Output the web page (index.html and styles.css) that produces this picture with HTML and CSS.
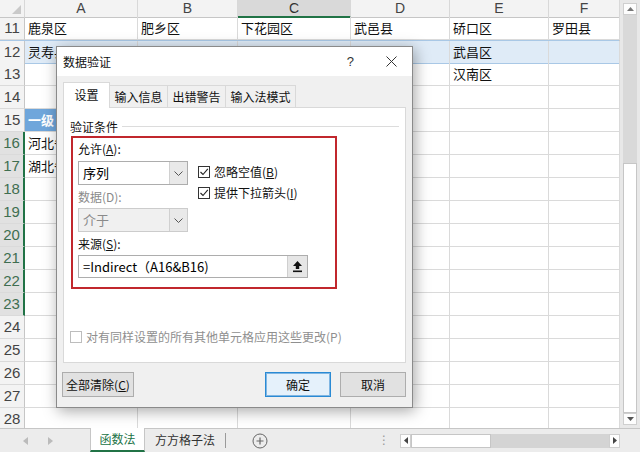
FILE: index.html
```html
<!DOCTYPE html>
<html lang="zh-CN">
<head>
  <meta charset="UTF-8">
  <title>数据验证</title>
  <link rel="stylesheet" href="styles.css">
</head>
<body>
  <div class="app">
    <div class="main">
      <div class="grid">
        <div class="row head">
          <div class="corner"><span class="tri"></span></div>
          <div class="ch">A</div><div class="ch">B</div><div class="ch sel">C</div>
          <div class="ch">D</div><div class="ch">E</div><div class="ch">F</div>
        </div>
        <div class="row"><div class="rh">11</div><div class="c">鹿泉区</div><div class="c">肥乡区</div><div class="c">下花园区</div><div class="c">武邑县</div><div class="c">硚口区</div><div class="c">罗田县</div></div>
        <div class="row hl"><div class="rh">12</div><div class="c">灵寿县</div><div class="c">邱县</div><div class="c"></div><div class="c">安平县</div><div class="c">武昌区</div><div class="c"></div></div>
        <div class="row"><div class="rh">13</div><div class="c"></div><div class="c"></div><div class="c"></div><div class="c"></div><div class="c">汉南区</div><div class="c"></div></div>
        <div class="row"><div class="rh">14</div><div class="c"></div><div class="c"></div><div class="c"></div><div class="c"></div><div class="c"></div><div class="c"></div></div>
        <div class="row"><div class="rh">15</div><div class="c blue">一级</div><div class="c blue"></div><div class="c"></div><div class="c"></div><div class="c"></div><div class="c"></div></div>
        <div class="row"><div class="rh on">16</div><div class="c">河北省</div><div class="c"></div><div class="c"></div><div class="c"></div><div class="c"></div><div class="c"></div></div>
        <div class="row"><div class="rh on">17</div><div class="c">湖北省</div><div class="c"></div><div class="c"></div><div class="c"></div><div class="c"></div><div class="c"></div></div>
        <div class="row"><div class="rh on">18</div><div class="c"></div><div class="c"></div><div class="c"></div><div class="c"></div><div class="c"></div><div class="c"></div></div>
        <div class="row"><div class="rh on">19</div><div class="c"></div><div class="c"></div><div class="c"></div><div class="c"></div><div class="c"></div><div class="c"></div></div>
        <div class="row"><div class="rh on">20</div><div class="c"></div><div class="c"></div><div class="c"></div><div class="c"></div><div class="c"></div><div class="c"></div></div>
        <div class="row"><div class="rh on">21</div><div class="c"></div><div class="c"></div><div class="c"></div><div class="c"></div><div class="c"></div><div class="c"></div></div>
        <div class="row"><div class="rh on">22</div><div class="c"></div><div class="c"></div><div class="c"></div><div class="c"></div><div class="c"></div><div class="c"></div></div>
        <div class="row"><div class="rh on">23</div><div class="c"></div><div class="c"></div><div class="c"></div><div class="c"></div><div class="c"></div><div class="c"></div></div>
        <div class="row"><div class="rh">24</div><div class="c"></div><div class="c"></div><div class="c"></div><div class="c"></div><div class="c"></div><div class="c"></div></div>
        <div class="row"><div class="rh">25</div><div class="c"></div><div class="c"></div><div class="c"></div><div class="c"></div><div class="c"></div><div class="c"></div></div>
        <div class="row"><div class="rh">26</div><div class="c"></div><div class="c"></div><div class="c"></div><div class="c"></div><div class="c"></div><div class="c"></div></div>
        <div class="row"><div class="rh">27</div><div class="c"></div><div class="c"></div><div class="c"></div><div class="c"></div><div class="c"></div><div class="c"></div></div>
        <div class="row"><div class="rh">28</div><div class="c"></div><div class="c"></div><div class="c"></div><div class="c"></div><div class="c"></div><div class="c"></div></div>
      </div>

      <div class="vscroll">
        <div class="arrow-btn"><svg width="7" height="4" viewBox="0 0 7 4"><path d="M0 4 L3.5 0 L7 4 Z" fill="#777"/></svg></div>
        <div class="vtrack"></div>
        <div class="vthumb"></div>
        <div class="arrow-btn"><svg width="7" height="4" viewBox="0 0 7 4"><path d="M0 0 L3.5 4 L7 0 Z" fill="#555"/></svg></div>
      </div>

      <!-- 数据验证 对话框 -->
      <div class="dialog">
        <div class="dlg-title">
          <span class="dlg-name">数据验证</span>
          <span class="help">?</span>
          <svg class="close" width="11" height="11" viewBox="0 0 11 11"><path d="M0.5 0.5 L10.5 10.5 M10.5 0.5 L0.5 10.5" stroke="#333" stroke-width="1"/></svg>
        </div>
        <div class="dlg-body">
          <div class="tabs">
            <div class="tab active">设置</div>
            <div class="tab t4">输入信息</div>
            <div class="tab t4">出错警告</div>
            <div class="tab t5">输入法模式</div>
          </div>
          <div class="panel">
            <div class="legend"><span>验证条件</span><span class="legend-line"></span></div>
            <div class="redbox">
              <div class="cols">
                <div class="leftcol">
                  <div class="lbl">允许(<u>A</u>):</div>
                  <div class="combo">
                    <span class="combo-text">序列</span>
                    <span class="combo-btn"><svg width="9" height="5" viewBox="0 0 9 5"><path d="M0.5 0.5 L4.5 4.5 L8.5 0.5" fill="none" stroke="#555"/></svg></span>
                  </div>
                  <div class="lbl gap dim">数据(D):</div>
                  <div class="combo off">
                    <span class="combo-text">介于</span>
                    <span class="combo-btn"><svg width="9" height="5" viewBox="0 0 9 5"><path d="M0.5 0.5 L4.5 4.5 L8.5 0.5" fill="none" stroke="#555"/></svg></span>
                  </div>
                </div>
                <div class="rightcol">
                  <div class="check">
                    <span class="box"><svg width="10" height="10" viewBox="0 0 10 10"><path d="M1.5 5 L4 7.5 L8.8 1.8" fill="none" stroke="#222" stroke-width="1.1"/></svg></span>
                    <span>忽略空值(<u>B</u>)</span>
                  </div>
                  <div class="check">
                    <span class="box"><svg width="10" height="10" viewBox="0 0 10 10"><path d="M1.5 5 L4 7.5 L8.8 1.8" fill="none" stroke="#222" stroke-width="1.1"/></svg></span>
                    <span>提供下拉箭头(<u>I</u>)</span>
                  </div>
                </div>
              </div>
              <div class="lbl gap">来源(<u>S</u>):</div>
              <div class="source">
                <span class="source-text">=Indirect（A16&amp;B16)</span>
                <span class="source-btn"><svg width="11" height="13" viewBox="0 0 11 13"><path d="M5.5 1 L10 6 H7.2 V9 H3.8 V6 H1 Z" fill="#111"/><rect x="1" y="10.5" width="9" height="1.6" fill="#111"/></svg></span>
              </div>
            </div>
            <div class="check applyall">
              <span class="box dimbox"></span>
              <span>对有同样设置的所有其他单元格应用这些更改(P)</span>
            </div>
          </div>
          <div class="buttons">
            <button class="btn">全部清除(<u>C</u>)</button>
            <span class="spacer"></span>
            <button class="btn primary">确定</button>
            <button class="btn">取消</button>
          </div>
        </div>
      </div>
    </div>

    <div class="tabbar">
      <div class="nav">
        <svg width="5" height="8" viewBox="0 0 5 8"><path d="M5 0 L0 4 L5 8 Z" fill="#bbb"/></svg>
        <svg width="5" height="8" viewBox="0 0 5 8"><path d="M0 0 L5 4 L0 8 Z" fill="#bbb"/></svg>
      </div>
      <div class="sheet-tab active">函数法</div>
      <div class="sheet-tab">方方格子法</div>
      <div class="add"><svg width="16" height="16" viewBox="0 0 16 16"><circle cx="8" cy="8" r="7" fill="none" stroke="#666"/><path d="M8 4.5 V11.5 M4.5 8 H11.5" stroke="#666" stroke-width="1.2"/></svg></div>
      <div class="dots">⋮</div>
      <div class="hscroll">
        <div class="h-arrow"><svg width="4" height="7" viewBox="0 0 4 7"><path d="M4 0 L0 3.5 L4 7 Z" fill="#444"/></svg></div>
        <div class="hthumb"></div>
        <div class="htrack"></div>
        <div class="h-arrow"><svg width="4" height="7" viewBox="0 0 4 7"><path d="M0 0 L4 3.5 L0 7 Z" fill="#444"/></svg></div>
      </div>
    </div>
  </div>
</body>
</html>
```

FILE: styles.css
```css
body {
  margin: 0;
  font-family: "Liberation Sans", "Noto Sans CJK SC", sans-serif;
  background: #ffffff;
  color: #000;
}

.app {
  width: 640px;
  height: 452px;
  overflow: hidden;
  display: flex;
  flex-direction: column;
}

.main {
  position: relative;
  height: 428px;
  display: flex;
  overflow: hidden;
}

/* 表格 */
.grid {
  width: 620px;
  border-right: 1px solid #c6c6c6;
  box-sizing: border-box;
}

.row {
  display: grid;
  grid-template-columns: 25px 113px 100px 113px 99px 99px 71px;
  height: 23px;
}

.row.head {
  height: 17px;
}

.corner, .ch {
  background: #f3f3f3;
  border-right: 1px solid #d8d8d8;
  border-bottom: 1px solid #c6c6c6;
  box-sizing: border-box;
}

.corner {
  position: relative;
}

.tri {
  position: absolute;
  right: 3px;
  bottom: 3px;
  width: 0;
  height: 0;
  border-left: 9px solid transparent;
  border-bottom: 9px solid #c9c9c9;
}

.ch {
  font-size: 14px;
  color: #444;
  text-align: center;
  line-height: 16px;
}

.ch.sel {
  background: #d9d9d9;
  border-bottom: 2px solid #217346;
  color: #333;
}

.rh {
  background: #f3f3f3;
  border-right: 1px solid #c6c6c6;
  border-bottom: 1px solid #dadada;
  box-sizing: border-box;
  font-size: 15px;
  color: #444;
  text-align: center;
  line-height: 22px;
}

.rh.on {
  background: #e1e1e1;
  color: #3f6e50;
  border-right: 2px solid #217346;
}

.c {
  border-right: 1px solid #dadada;
  border-bottom: 1px solid #dadada;
  box-sizing: border-box;
  font-family: "Noto Sans CJK SC", sans-serif;
  font-size: 13px;
  line-height: 22px;
  padding-left: 3px;
  white-space: nowrap;
  overflow: hidden;
  color: #111;
}

.hl .c {
  background: #dfebf7;
  border-bottom-color: #a9c8e6;
}

.hl {
  border-top: 1px solid #a9c8e6;
  height: 22px;
}

.c.blue {
  background: #6fa6db;
  color: #fff;
  font-weight: bold;
}

/* 垂直滚动条 */
.vscroll {
  width: 20px;
  background: #e8e8e8;
  display: flex;
  flex-direction: column;
  align-items: center;
  padding-top: 3px;
  box-sizing: border-box;
}

.arrow-btn {
  width: 14px;
  height: 12px;
  background: #fdfdfd;
  border: 1px solid #cfcfcf;
  box-sizing: border-box;
  display: flex;
  align-items: center;
  justify-content: center;
}

.vtrack {
  width: 14px;
  height: 148px;
  background: #d9d9d9;
}

.vthumb {
  width: 14px;
  height: 250px;
  background: #ffffff;
  border: 1px solid #c6c6c6;
  box-sizing: border-box;
}

/* 对话框 */
.dialog {
  position: absolute;
  left: 56px;
  top: 46px;
  width: 355px;
  border: 1px solid #8a8a8a;
  background: #f0f0f0;
  box-shadow: 2px 3px 14px rgba(0, 0, 0, 0.35);
  font-family: "Noto Sans CJK SC", sans-serif;
  font-size: 12px;
}

.dlg-title {
  height: 29px;
  background: #ffffff;
  display: flex;
  align-items: center;
  padding-left: 6px;
}

.dlg-name {
  flex: 1;
  color: #111;
}

.help {
  font-family: "Liberation Sans", sans-serif;
  font-size: 13px;
  color: #333;
  margin-right: 32px;
}

.close {
  margin-right: 15px;
}

.dlg-body {
  padding: 6px 6px 10px 6px;
}

.tabs {
  display: flex;
  align-items: flex-end;
  height: 25px;
  position: relative;
  z-index: 1;
}

.tab {
  height: 22px;
  line-height: 21px;
  border: 1px solid #d9d9d9;
  border-bottom: none;
  border-left: none;
  box-sizing: border-box;
  color: #111;
  text-align: center;
  white-space: nowrap;
}

.tab.t4 {
  width: 58px;
}

.tab.t5 {
  width: 70px;
}

.tab.active {
  width: 47px;
  height: 26px;
  margin-bottom: -1px;
  background: #ffffff;
  border-left: 1px solid #d9d9d9;
  line-height: 24px;
}

.panel {
  height: 256px;
  background: #ffffff;
  border: 1px solid #d9d9d9;
  box-sizing: border-box;
  padding: 10px 0 0 6px;
}

.legend {
  display: flex;
  align-items: center;
  height: 16px;
  color: #111;
}

.legend-line {
  flex: 1;
  height: 1px;
  background: #dcdcdc;
  margin: 0 6px 0 4px;
}

.redbox {
  margin: 2px 0 0 1px;
  width: 266px;
  height: 153px;
  border: 2px solid #c1272d;
  box-sizing: border-box;
  padding: 3px 0 0 5px;
}

.cols {
  display: flex;
}

.leftcol {
  width: 110px;
}

.lbl {
  height: 16px;
  line-height: 16px;
  margin-bottom: 4px;
  color: #111;
}

.lbl.gap {
  margin-top: 4px;
  margin-bottom: 3px;
}

.dim {
  color: #8a8a8a;
}

.combo {
  height: 24px;
  border: 1px solid #adadad;
  box-sizing: border-box;
  background: #ffffff;
  display: flex;
}

.combo-text {
  flex: 1;
  line-height: 22px;
  padding-left: 4px;
  font-size: 13px;
}

.combo-btn {
  width: 17px;
  border-left: 1px solid #d0d0d0;
  background: #e9e9e9;
  display: flex;
  align-items: center;
  justify-content: center;
}

.combo.off {
  background: #f0f0f0;
  border-color: #cccccc;
}

.combo.off .combo-text {
  color: #8a8a8a;
}

.rightcol {
  margin-left: 10px;
  padding-top: 20px;
}

.check {
  display: flex;
  align-items: center;
  height: 21px;
  color: #111;
}

.box {
  width: 12px;
  height: 12px;
  border: 1px solid #333;
  box-sizing: border-box;
  display: flex;
  align-items: center;
  justify-content: center;
  margin-right: 4px;
  background: #fff;
}

.source {
  width: 230px;
  height: 23px;
  border: 1px solid #adadad;
  box-sizing: border-box;
  display: flex;
}

.source-text {
  flex: 1;
  line-height: 21px;
  padding-left: 4px;
  font-size: 13px;
}

.source-btn {
  width: 19px;
  background: #e6e6e6;
  border-left: 1px solid #cfcfcf;
  display: flex;
  align-items: center;
  justify-content: center;
}

.applyall {
  margin-top: 37px;
  color: #8f8f8f;
}

.dimbox {
  border-color: #bdbdbd;
}

.buttons {
  display: flex;
  margin-top: 9px;
  margin-left: -1px;
}

.spacer {
  flex: 1;
}

.btn {
  height: 25px;
  width: 66px;
  border: 1px solid #adadad;
  background: #e1e1e1;
  font-family: "Noto Sans CJK SC", sans-serif;
  font-size: 12px;
  color: #111;
  padding: 0;
  margin-left: 9px;
}

.btn:first-child {
  width: 72px;
  margin-left: 0;
}

.btn.primary {
  background: #e5f1fb;
  border: 1px solid #2a8ad4;
  box-shadow: inset 0 0 0 1px #7fb6e3;
}

/* 底部工作表标签 */
.tabbar {
  height: 24px;
  background: #ececec;
  border-top: 1px solid #c6c6c6;
  box-sizing: border-box;
  display: flex;
  align-items: stretch;
  font-family: "Noto Sans CJK SC", sans-serif;
  font-size: 12px;
}

.nav {
  width: 90px;
  display: flex;
  align-items: center;
  gap: 20px;
  padding-left: 23px;
  box-sizing: border-box;
}

.sheet-tab {
  padding: 0 10px;
  color: #333;
  border-right: 1px solid #9a9a9a;
  margin: 4px 0;
  line-height: 14px;
}

.sheet-tab.active {
  background: #ffffff;
  color: #217346;
  margin: -1px 0 0 0;
  line-height: 22px;
  width: 55px;
  box-sizing: border-box;
  text-align: center;
  padding: 0;
  border-left: 1px solid #c6c6c6;
  border-right: 1px solid #c6c6c6;
  border-bottom: 2px solid #217346;
}

.add {
  display: flex;
  align-items: center;
  margin-left: 26px;
}

.dots {
  margin-left: auto;
  margin-right: 10px;
  color: #999;
  line-height: 22px;
  font-family: "DejaVu Sans", sans-serif;
}

.hscroll {
  margin-right: 20px;
  width: 220px;
  display: flex;
  align-items: center;
}

.h-arrow {
  width: 11px;
  height: 14px;
  background: #fdfdfd;
  border: 1px solid #cfcfcf;
  box-sizing: border-box;
  display: flex;
  align-items: center;
  justify-content: center;
}

.hthumb {
  width: 80px;
  height: 14px;
  background: #ffffff;
  border: 1px solid #c6c6c6;
  box-sizing: border-box;
}

.htrack {
  flex: 1;
  height: 14px;
  background: #d4d4d4;
}
```
